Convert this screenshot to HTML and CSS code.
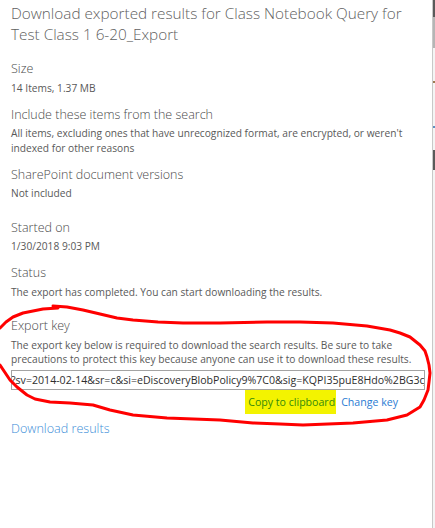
FILE: index.html
```html
<!DOCTYPE html>
<html lang="en">

<head>
    <meta charset="UTF-8">
    <title>Download exported results</title>
    <link rel="stylesheet" href="styles.css">
</head>

<body>

    <div class="frame">
        <div class="panel">
            <h1 class="title">Download exported results for Class Notebook Query for Test Class 1 6-20_Export</h1>

            <section class="field">
                <h2 class="label">Size</h2>
                <p class="value">14 Items, 1.37 MB</p>
            </section>

            <section class="field">
                <h2 class="label">Include these items from the search</h2>
                <p class="value">All items, excluding ones that have unrecognized format, are encrypted, or weren't indexed for other reasons</p>
            </section>

            <section class="field">
                <h2 class="label">SharePoint document versions</h2>
                <p class="value">Not included</p>
            </section>

            <section class="field wide">
                <h2 class="label">Started on</h2>
                <p class="value">1/30/2018 9:03 PM</p>
            </section>

            <section class="field">
                <h2 class="label">Status</h2>
                <p class="value">The export has completed. You can start downloading the results.</p>
            </section>

            <section class="field wide">
                <h2 class="label">Export key</h2>
                <p class="value">The export key below is required to download the search results. Be sure to take precautions to protect this key because anyone can use it to download these results.</p>
                <div class="key-box">
                    <span class="key-text">?sv=2014-02-14&amp;sr=c&amp;si=eDiscoveryBlobPolicy9%7C0&amp;sig=KQPI35puE8Hdo%2BG3cJtL4nQx7Wr%3D</span>
                </div>
                <div class="key-actions">
                    <a class="link copy" href="#">Copy to clipboard</a>
                    <a class="link" href="#">Change key</a>
                </div>
            </section>

            <a class="download" href="#">Download results</a>
        </div>

        <!-- edge of the window behind the panel -->
        <div class="edge">
            <span class="edge-dark"></span>
            <span class="edge-mid"></span>
            <span class="edge-dot brown"></span>
            <span class="edge-dot blue"></span>
            <span class="edge-dark low"></span>
        </div>

        <!-- red marker loop drawn around the export key -->
        <svg class="ink" width="435" height="528" viewBox="0 0 435 528">
            <path d="M0,328 L6,322 L13,317 L23,313 L33,311 L43,309 L58,308" />
            <path d="M53,306 L67,307 L83,310 L100,314 L117,318 L133,320 L158,322 L183,323 L220,323 L267,322 L300,322 L333,323 L367,326 L390,330 L400,333 L410,337 L420,345 L425,351 L427,357 L429,365 L430,373 L429,382 L428,390 L424,400 L420,407 L407,415 L387,420 L353,423 L303,425 L280,424 L253,423 L220,420 L167,418 L133,415 L110,410 L93,405 L70,403 L50,402 L35,399 L27,395 L17,387 L10,380 L0,365" />
        </svg>
    </div>

</body>

</html>
```

FILE: styles.css
```css
body,
html {
    margin: 0;
    height: 100%;
    background: #fff;
    font-family: "Segoe UI", "Open Sans", sans-serif;
}

.frame {
    position: relative;
    display: flex;
    height: 100%;
}

.panel {
    flex: 0 0 433px;
    min-width: 0;
    box-sizing: border-box;
    padding: 3px 7px 0 11px;
    border-right: 1px solid #c8c8c8;
}

.title {
    margin: 0;
    max-width: 405px;
    font-size: 15.3px;
    line-height: 21px;
    font-weight: 300;
    color: #5f5f5f;
}

.field {
    margin-top: 10.5px;
}

.title + .field {
    margin-top: 15px;
}

.field.wide {
    margin-top: 18px;
}

.label {
    margin: 0;
    font-size: 12.5px;
    line-height: 18px;
    font-weight: 300;
    color: #4a4a4a;
}

.value {
    margin: 2.5px 0 0;
    font-size: 10.2px;
    line-height: 14.5px;
    color: #595959;
}

.key-box {
    margin-top: 3px;
    height: 20px;
    box-sizing: border-box;
    border: 1px solid #a3a3a3;
    overflow: hidden;
    white-space: nowrap;
}

.key-text {
    display: block;
    font-size: 10.6px;
    line-height: 18px;
    color: #2e2e2e;
    text-indent: -1px;
}

.key-actions {
    display: flex;
    justify-content: flex-end;
    gap: 5px;
    padding-right: 27px;
    height: 24px;
    line-height: 24px;
}

.link {
    font-size: 10.6px;
    color: #2b7cd3;
    text-decoration: none;
}

/* marker highlight over the copy link */
.copy {
    padding: 0 1px 0 3px;
    background: #f3f300;
    color: #338a0c;
}

.download {
    display: block;
    margin-top: 5px;
    font-size: 12.6px;
    line-height: 20px;
    font-weight: 300;
    color: #3a8dd8;
    text-decoration: none;
}

.edge {
    flex: 1;
    display: flex;
    flex-direction: column;
    background: #f4f4f4;
}

.edge-dark {
    height: 17px;
    background: #5a5a5a;
}

.edge-dark.low {
    height: 20px;
    margin-top: 22px;
}

.edge-mid {
    height: 31px;
    background: #b5b5b5;
}

.edge-dot {
    height: 2px;
}

.edge-dot.brown {
    margin-top: 33px;
    background: #9c7a50;
}

.edge-dot.blue {
    margin-top: 43px;
    background: #5d8fc0;
}

.ink {
    position: absolute;
    top: 0;
    left: 0;
    pointer-events: none;
    fill: none;
    stroke: #f00;
    stroke-width: 3;
    stroke-linejoin: round;
    stroke-linecap: round;
}
```
